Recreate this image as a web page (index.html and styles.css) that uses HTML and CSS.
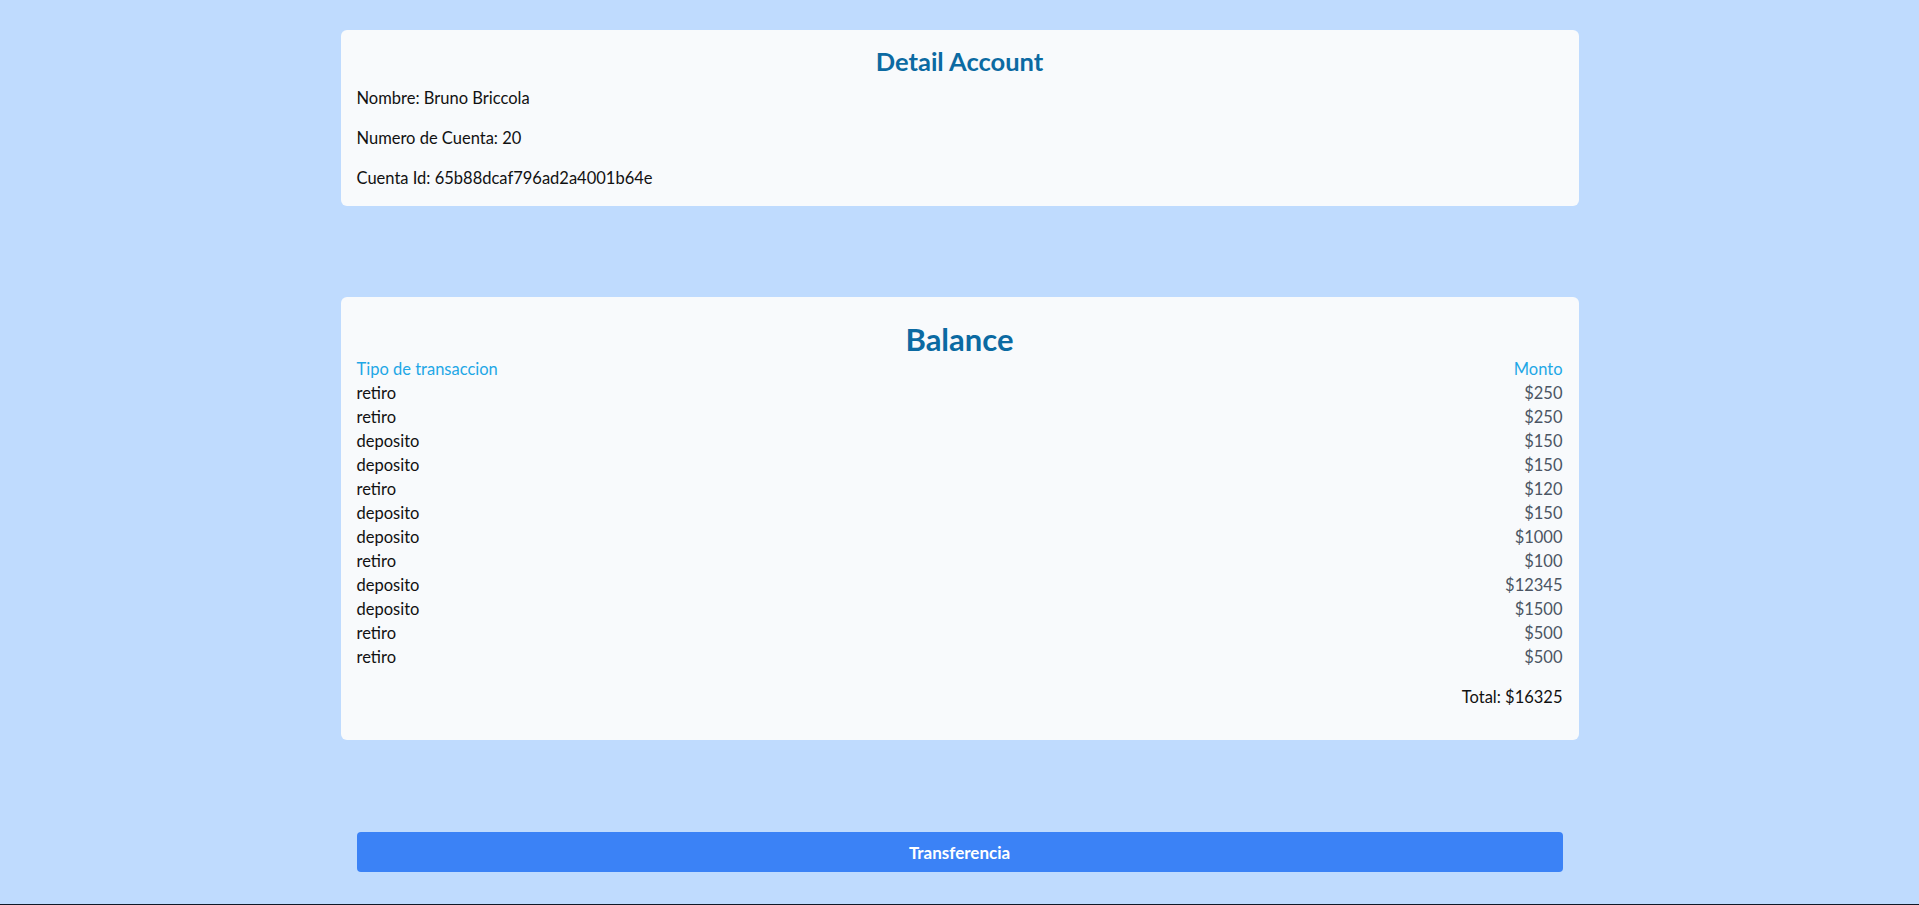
FILE: index.html
```html
<!DOCTYPE html>
<html lang="es">
<head>
<meta charset="utf-8">
<title>Detail Account</title>
<link rel="stylesheet" href="styles.css">
</head>
<body>
<main class="container">
  <section class="card card-account">
    <h2 class="card-title">Detail Account</h2>
    <p class="info">Nombre: Bruno Briccola</p>
    <p class="info">Numero de Cuenta: 20</p>
    <p class="info">Cuenta Id: 65b88dcaf796ad2a4001b64e</p>
  </section>

  <section class="card card-balance">
    <h2 class="balance-title">Balance</h2>
    <div class="tx-list">
      <div class="tx-row tx-head"><span>Tipo de transaccion</span><span>Monto</span></div>
      <div class="tx-row"><span class="tx-type">retiro</span><span class="tx-amount">$250</span></div>
      <div class="tx-row"><span class="tx-type">retiro</span><span class="tx-amount">$250</span></div>
      <div class="tx-row"><span class="tx-type">deposito</span><span class="tx-amount">$150</span></div>
      <div class="tx-row"><span class="tx-type">deposito</span><span class="tx-amount">$150</span></div>
      <div class="tx-row"><span class="tx-type">retiro</span><span class="tx-amount">$120</span></div>
      <div class="tx-row"><span class="tx-type">deposito</span><span class="tx-amount">$150</span></div>
      <div class="tx-row"><span class="tx-type">deposito</span><span class="tx-amount">$1000</span></div>
      <div class="tx-row"><span class="tx-type">retiro</span><span class="tx-amount">$100</span></div>
      <div class="tx-row"><span class="tx-type">deposito</span><span class="tx-amount">$12345</span></div>
      <div class="tx-row"><span class="tx-type">deposito</span><span class="tx-amount">$1500</span></div>
      <div class="tx-row"><span class="tx-type">retiro</span><span class="tx-amount">$500</span></div>
      <div class="tx-row"><span class="tx-type">retiro</span><span class="tx-amount">$500</span></div>
    </div>
    <p class="total">Total: $16325</p>
  </section>

  <div class="actions">
    <button class="btn-transfer" type="button">Transferencia</button>
  </div>
</main>
<footer class="footer"></footer>
</body>
</html>
```

FILE: styles.css
```css
* {
  box-sizing: border-box;
}

html, body {
  margin: 0;
  padding: 0;
}

body {
  background: #bfdbfe;
  font-family: Lato, "Noto Sans", sans-serif;
  font-size: 16.5px;
  line-height: 24px;
  color: #111111;
}

.container {
  width: 1238px;
  margin: 0 auto;
  padding-top: 30px;
  display: flex;
  flex-direction: column;
}

.card {
  background: #f8fafc;
  border-radius: 6px;
  padding: 0 16px;
}

.card-title {
  margin: 15px 0 9px;
  font-size: 25.5px;
  line-height: 32px;
  font-weight: 700;
  text-align: center;
  color: #0b6aa2;
}

.info {
  margin: 0 0 16px;
}

.card-balance {
  margin-top: 91px;
  padding-bottom: 31px;
}

.balance-title {
  margin: 24px 0 0;
  font-size: 31px;
  line-height: 36px;
  font-weight: 700;
  text-align: center;
  color: #0b6aa2;
}

.tx-list {
  display: flex;
  flex-direction: column;
}

.tx-row {
  display: flex;
  justify-content: space-between;
}

.tx-head {
  color: #1ea7e6;
}

.tx-amount {
  color: #4b5563;
}

.total {
  margin: 16px 0 0;
  text-align: right;
  font-weight: 400;
}

.actions {
  margin-top: 92px;
  padding: 0 16px;
}

.btn-transfer {
  display: block;
  width: 100%;
  height: 40px;
  border: none;
  border-radius: 4px;
  background: #3b82f6;
  color: #ffffff;
  font-family: inherit;
  font-size: 17px;
  font-weight: 700;
  cursor: pointer;
}

.footer {
  margin-top: 32px;
  height: 80px;
  background: #111827;
}
```
